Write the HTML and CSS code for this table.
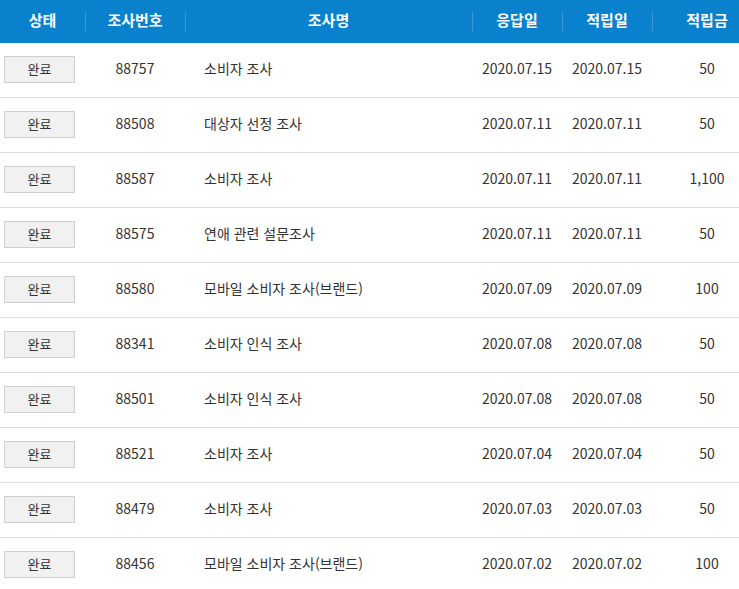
FILE: index.html
```html
<!DOCTYPE html>
<html lang="ko">
<head>
<meta charset="utf-8">
<title>조사 내역</title>
<link rel="stylesheet" href="styles.css">
</head>
<body>
<div class="wrap">
<table class="list">
  <colgroup>
    <col class="c-state"><col class="c-no"><col class="c-name"><col class="c-date"><col class="c-date"><col class="c-amt">
  </colgroup>
  <thead>
    <tr>
      <th><span class="h">상태</span></th>
      <th class="sep"><span class="h">조사번호</span></th>
      <th class="sep"><span class="h">조사명</span></th>
      <th class="sep"><span class="h">응답일</span></th>
      <th class="sep"><span class="h">적립일</span></th>
      <th class="sep"><span class="h">적립금</span></th>
    </tr>
  </thead>
  <tbody>
    <tr><td><span class="btn">완료</span></td><td><span class="t">88757</span></td><td class="name"><span class="t">소비자 조사</span></td><td><span class="t">2020.07.15</span></td><td><span class="t">2020.07.15</span></td><td><span class="t">50</span></td></tr>
    <tr><td><span class="btn">완료</span></td><td><span class="t">88508</span></td><td class="name"><span class="t">대상자 선정 조사</span></td><td><span class="t">2020.07.11</span></td><td><span class="t">2020.07.11</span></td><td><span class="t">50</span></td></tr>
    <tr><td><span class="btn">완료</span></td><td><span class="t">88587</span></td><td class="name"><span class="t">소비자 조사</span></td><td><span class="t">2020.07.11</span></td><td><span class="t">2020.07.11</span></td><td><span class="t">1,100</span></td></tr>
    <tr><td><span class="btn">완료</span></td><td><span class="t">88575</span></td><td class="name"><span class="t">연애 관련 설문조사</span></td><td><span class="t">2020.07.11</span></td><td><span class="t">2020.07.11</span></td><td><span class="t">50</span></td></tr>
    <tr><td><span class="btn">완료</span></td><td><span class="t">88580</span></td><td class="name"><span class="t">모바일 소비자 조사(브랜드)</span></td><td><span class="t">2020.07.09</span></td><td><span class="t">2020.07.09</span></td><td><span class="t">100</span></td></tr>
    <tr><td><span class="btn">완료</span></td><td><span class="t">88341</span></td><td class="name"><span class="t">소비자 인식 조사</span></td><td><span class="t">2020.07.08</span></td><td><span class="t">2020.07.08</span></td><td><span class="t">50</span></td></tr>
    <tr><td><span class="btn">완료</span></td><td><span class="t">88501</span></td><td class="name"><span class="t">소비자 인식 조사</span></td><td><span class="t">2020.07.08</span></td><td><span class="t">2020.07.08</span></td><td><span class="t">50</span></td></tr>
    <tr><td><span class="btn">완료</span></td><td><span class="t">88521</span></td><td class="name"><span class="t">소비자 조사</span></td><td><span class="t">2020.07.04</span></td><td><span class="t">2020.07.04</span></td><td><span class="t">50</span></td></tr>
    <tr><td><span class="btn">완료</span></td><td><span class="t">88479</span></td><td class="name"><span class="t">소비자 조사</span></td><td><span class="t">2020.07.03</span></td><td><span class="t">2020.07.03</span></td><td><span class="t">50</span></td></tr>
    <tr><td><span class="btn">완료</span></td><td><span class="t">88456</span></td><td class="name"><span class="t">모바일 소비자 조사(브랜드)</span></td><td><span class="t">2020.07.02</span></td><td><span class="t">2020.07.02</span></td><td><span class="t">100</span></td></tr>
  </tbody>
</table>
</div>
</body>
</html>
```
FILE: styles.css
```css
html, body {
  margin: 0;
  padding: 0;
  background: #fff;
}
.wrap {
  width: 739px;
  height: 589px;
  overflow: hidden;
}
.list {
  width: 762px;
  border-collapse: collapse;
  table-layout: fixed;
  font-family: "Noto Sans CJK KR", "Noto Sans", sans-serif;
  color: #333;
  font-size: 14px;
}
.c-state { width: 85px; }
.c-no { width: 100px; }
.c-name { width: 287px; }
.c-date { width: 90px; }
.c-amt { width: 110px; }
thead th {
  background: #0981cc;
  color: #fff;
  font-size: 15px;
  font-weight: bold;
  height: 43px;
  padding: 0;
  text-align: center;
  position: relative;
}
thead th.sep::before {
  content: "";
  position: absolute;
  left: 0;
  top: 12px;
  height: 19px;
  width: 1px;
  background: #3a9ad6;
}
.h {
  position: relative;
  top: -2px;
}
tbody td {
  height: 54px;
  padding: 0;
  text-align: center;
  border-bottom: 1px solid #dedede;
  vertical-align: middle;
}
tbody td.name {
  text-align: left;
  padding-left: 19px;
}
.t {
  position: relative;
  top: -2px;
}
.btn {
  display: block;
  box-sizing: border-box;
  width: 71px;
  height: 27px;
  margin-left: 4px;
  border: 1px solid #cfcfcf;
  background: #f1f1f1;
  font-size: 13px;
  line-height: 24px;
  text-align: center;
  color: #333;
  position: relative;
  top: -1px;
}
```
